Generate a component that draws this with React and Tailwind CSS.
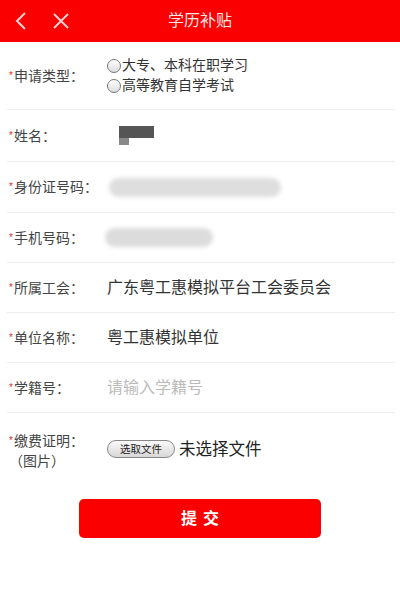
import React from "react";

const font = { fontFamily: '"Liberation Sans", "Noto Sans CJK SC", sans-serif' };

function Label({ children }) {
  return (
    <div className="w-[98px] shrink-0 text-[14px] text-[#444] leading-[20px]">
      <span className="text-[#e03030] text-[10px] align-top mr-[1px]">*</span>
      {children}
    </div>
  );
}

function Row({ label, children, h = "h-[50px]" }) {
  return (
    <div className={`flex items-center ${h} border-b border-[#eeeeee] ml-[7px] mr-[5px] pl-[2px]`}>
      <Label>{label}</Label>
      <div className="flex-1 text-[16px] text-[#333]">{children}</div>
    </div>
  );
}

function Radio({ children }) {
  return (
    <div className="flex items-center h-[20px] text-[14px] text-[#333]">
      <span className="w-[14px] h-[14px] rounded-full border border-[#777] bg-gradient-to-b from-[#fff] to-[#ddd] mr-[1px]" />
      {children}
    </div>
  );
}

export default function App() {
  return (
    <div className="w-[400px] h-[596px] bg-white overflow-hidden" style={font}>
      <div className="h-[42px] bg-[#fb0000] flex items-center relative">
        <svg className="ml-[14px]" width="14" height="20" viewBox="0 0 14 20" fill="none">
          <path d="M11 2 L3 10 L11 18" stroke="#ffd0d0" strokeWidth="2" />
        </svg>
        <svg className="ml-[24px]" width="18" height="18" viewBox="0 0 18 18" fill="none">
          <path d="M2 2 L16 16 M16 2 L2 16" stroke="#ffd0d0" strokeWidth="2" />
        </svg>
        <div className="absolute inset-0 flex items-center justify-center text-[16px] text-[#ffe4e4] pointer-events-none">
          学历补贴
        </div>
      </div>

      <Row label="申请类型：" h="h-[68px]">
        <div className="flex flex-col">
          <Radio>大专、本科在职学习</Radio>
          <Radio>高等教育自学考试</Radio>
        </div>
      </Row>

      <Row label="姓名：" h="h-[52px]">
        <div className="ml-[12px] flex flex-col blur-[0.5px]">
          <div className="w-[35px] h-[12px] bg-[#555]" />
          <div className="w-[10px] h-[7px] bg-[#888]" />
        </div>
      </Row>

      <Row label="身份证号码：" h="h-[51px]">
        <div className="ml-[2px] w-[172px] h-[19px] rounded-full bg-[#dedede] blur-[2px]" />
      </Row>

      <Row label="手机号码：">
        <div className="ml-[-2px] w-[108px] h-[19px] rounded-full bg-[#dcdcdc] blur-[2px]" />
      </Row>

      <Row label="所属工会：">广东粤工惠模拟平台工会委员会</Row>

      <Row label="单位名称：">粤工惠模拟单位</Row>

      <Row label="学籍号：">
        <span className="text-[#bbbbbb]">请输入学籍号</span>
      </Row>

      <div className="flex ml-[7px] pl-[2px] pt-[18px]">
        <div className="w-[98px] shrink-0 text-[14px] text-[#444] leading-[20px]">
          <div>
            <span className="text-[#e03030] text-[10px] align-top mr-[1px]">*</span>
            缴费证明：
          </div>
          <div>（图片）</div>
        </div>
        <div className="flex items-center h-[30px] mt-[3px]">
          <span className="h-[18px] px-[12px] rounded-full border border-[#888] bg-gradient-to-b from-[#fafafa] to-[#d8d8d8] text-[10.5px] text-[#222] leading-[16px]">
            选取文件
          </span>
          <span className="ml-[4px] text-[16.5px] text-[#222]">未选择文件</span>
        </div>
      </div>

      <div className="flex justify-center mt-[28px]">
        <button className="w-[242px] h-[39px] rounded-[5px] bg-[#fb0000] text-white text-[16px] font-bold tracking-[6px] pl-[6px]">
          提交
        </button>
      </div>
    </div>
  );
}
